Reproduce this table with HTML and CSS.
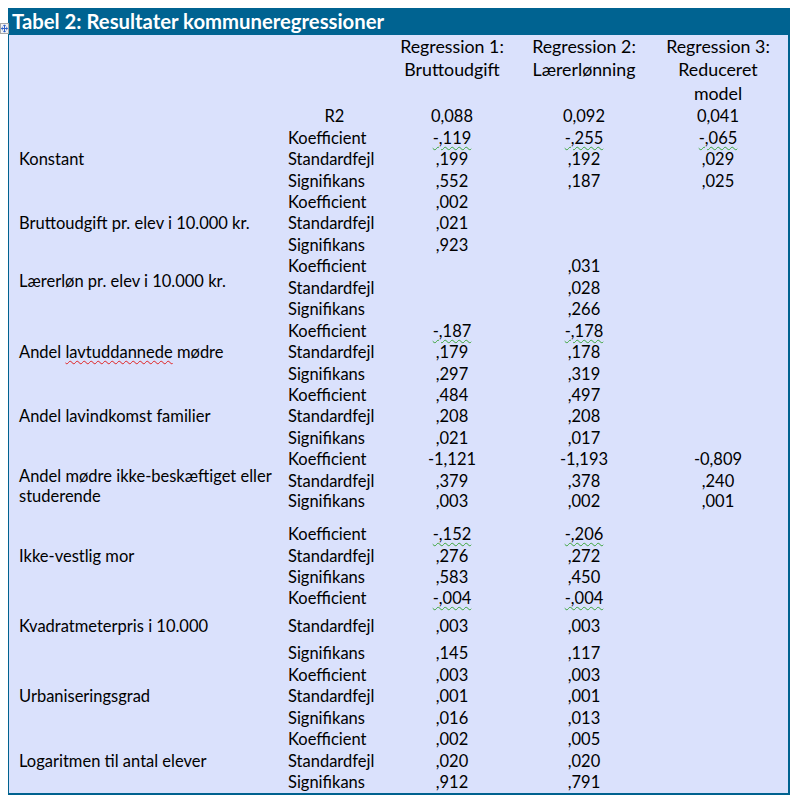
FILE: index.html
```html
<!DOCTYPE html>
<html lang="da">
<head>
<meta charset="utf-8">
<title>Tabel 2: Resultater kommuneregressioner</title>
<link rel="stylesheet" href="styles.css">
</head>
<body>
<div class="sheet">
  <div class="move-handle">
    <svg width="9" height="11" viewBox="0 0 9 11">
      <rect x="0.5" y="0.5" width="8" height="10" fill="#f4f4f4" stroke="#a8a8a8"/>
      <path d="M4.5 2 V9 M1.5 5.5 H7.5" stroke="#3060c8" stroke-width="1" fill="none"/>
      <path d="M3.2 3.2 L4.5 1.8 L5.8 3.2 M3.2 7.8 L4.5 9.2 L5.8 7.8 M2.7 4.2 L1.3 5.5 L2.7 6.8 M6.3 4.2 L7.7 5.5 L6.3 6.8" stroke="#3060c8" stroke-width="1" fill="none"/>
    </svg>
  </div>
  <div class="title">Tabel 2: Resultater kommuneregressioner</div>
  <div class="panel">
    <table class="res">
      <colgroup>
        <col class="col-label">
        <col class="col-sub">
        <col class="col-n1">
        <col class="col-n2">
        <col class="col-n3">
      </colgroup>
      <thead>
        <tr class="head">
          <th></th><th></th>
          <th>Regression 1:<br>Bruttoudgift</th>
          <th>Regression 2:<br>Lærerlønning</th>
          <th>Regression 3:<br>Reduceret<br>model</th>
        </tr>
        <tr class="r2">
          <td></td><td class="sub center">R2</td>
          <td class="num">0,088</td><td class="num">0,092</td><td class="num">0,041</td>
        </tr>
      </thead>
      <tbody>
        <tr><td class="label" rowspan="3">Konstant</td><td class="sub">Koefficient</td><td class="num"><span class="sq">-,119</span></td><td class="num"><span class="sq">-,255</span></td><td class="num"><span class="sq">-,065</span></td></tr>
        <tr><td class="sub">Standardfejl</td><td class="num">,199</td><td class="num">,192</td><td class="num">,029</td></tr>
        <tr><td class="sub">Signifikans</td><td class="num">,552</td><td class="num">,187</td><td class="num">,025</td></tr>

        <tr><td class="label" rowspan="3">Bruttoudgift pr. elev i 10.000 kr.</td><td class="sub">Koefficient</td><td class="num">,002</td><td class="num"></td><td class="num"></td></tr>
        <tr><td class="sub">Standardfejl</td><td class="num">,021</td><td class="num"></td><td class="num"></td></tr>
        <tr><td class="sub">Signifikans</td><td class="num">,923</td><td class="num"></td><td class="num"></td></tr>

        <tr><td class="label raised" rowspan="3">Lærerløn pr. elev i 10.000 kr.</td><td class="sub">Koefficient</td><td class="num"></td><td class="num">,031</td><td class="num"></td></tr>
        <tr><td class="sub">Standardfejl</td><td class="num"></td><td class="num">,028</td><td class="num"></td></tr>
        <tr><td class="sub">Signifikans</td><td class="num"></td><td class="num">,266</td><td class="num"></td></tr>

        <tr><td class="label" rowspan="3">Andel <span class="sp">lavtuddannede</span> mødre</td><td class="sub">Koefficient</td><td class="num"><span class="sq">-,187</span></td><td class="num"><span class="sq">-,178</span></td><td class="num"></td></tr>
        <tr><td class="sub">Standardfejl</td><td class="num">,179</td><td class="num">,178</td><td class="num"></td></tr>
        <tr><td class="sub">Signifikans</td><td class="num">,297</td><td class="num">,319</td><td class="num"></td></tr>

        <tr><td class="label" rowspan="3">Andel lavindkomst familier</td><td class="sub">Koefficient</td><td class="num">,484</td><td class="num">,497</td><td class="num"></td></tr>
        <tr><td class="sub">Standardfejl</td><td class="num">,208</td><td class="num">,208</td><td class="num"></td></tr>
        <tr><td class="sub">Signifikans</td><td class="num">,021</td><td class="num">,017</td><td class="num"></td></tr>

        <tr><td class="label two" rowspan="3">Andel mødre ikke-beskæftiget eller<br>studerende</td><td class="sub">Koefficient</td><td class="num">-1,121</td><td class="num">-1,193</td><td class="num">-0,809</td></tr>
        <tr><td class="sub">Standardfejl</td><td class="num">,379</td><td class="num">,378</td><td class="num">,240</td></tr>
        <tr class="tall-top"><td class="sub">Signifikans</td><td class="num">,003</td><td class="num">,002</td><td class="num">,001</td></tr>

        <tr><td class="label" rowspan="3">Ikke-vestlig mor</td><td class="sub">Koefficient</td><td class="num"><span class="sq">-,152</span></td><td class="num"><span class="sq">-,206</span></td><td class="num"></td></tr>
        <tr><td class="sub">Standardfejl</td><td class="num">,276</td><td class="num">,272</td><td class="num"></td></tr>
        <tr><td class="sub">Signifikans</td><td class="num">,583</td><td class="num">,450</td><td class="num"></td></tr>

        <tr><td class="label" rowspan="3">Kvadratmeterpris i 10.000</td><td class="sub">Koefficient</td><td class="num"><span class="sq">-,004</span></td><td class="num"><span class="sq">-,004</span></td><td class="num"></td></tr>
        <tr class="tall-mid"><td class="sub">Standardfejl</td><td class="num">,003</td><td class="num">,003</td><td class="num"></td></tr>
        <tr><td class="sub">Signifikans</td><td class="num">,145</td><td class="num">,117</td><td class="num"></td></tr>

        <tr><td class="label" rowspan="3">Urbaniseringsgrad</td><td class="sub">Koefficient</td><td class="num">,003</td><td class="num">,003</td><td class="num"></td></tr>
        <tr><td class="sub">Standardfejl</td><td class="num">,001</td><td class="num">,001</td><td class="num"></td></tr>
        <tr><td class="sub">Signifikans</td><td class="num">,016</td><td class="num">,013</td><td class="num"></td></tr>

        <tr><td class="label" rowspan="3">Logaritmen til antal elever</td><td class="sub">Koefficient</td><td class="num">,002</td><td class="num">,005</td><td class="num"></td></tr>
        <tr><td class="sub">Standardfejl</td><td class="num">,020</td><td class="num">,020</td><td class="num"></td></tr>
        <tr><td class="sub">Signifikans</td><td class="num">,912</td><td class="num">,791</td><td class="num"></td></tr>
      </tbody>
    </table>
  </div>
  <div class="resize-handle"></div>
</div>
</body>
</html>
```

FILE: styles.css
```css
html, body {
  margin: 0;
  padding: 0;
  background: #ffffff;
}

body {
  font-family: Lato, "Open Sans", "Liberation Sans", sans-serif;
  color: #000000;
}

.sheet {
  position: relative;
  margin: 8px 0 0 8px;
  width: 782px;
}

.move-handle {
  position: absolute;
  left: -8px;
  top: 15px;
  width: 9px;
  height: 11px;
  line-height: 0;
}

.title {
  height: 27px;
  background: #006391;
  color: #ffffff;
  font-weight: 700;
  font-size: 20.3px;
  line-height: 27px;
  padding-left: 4px;
  white-space: nowrap;
}

.panel {
  background: #dae1fc;
  border-left: 1px solid #00628f;
  border-right: 2px solid #00628f;
  border-bottom: 2px solid #00628f;
}

.res {
  width: 779px;
  table-layout: fixed;
  border-collapse: collapse;
  border-spacing: 0;
  font-size: 16.5px;
}

.col-label { width: 276px; }
.col-sub { width: 99px; }
.col-n1 { width: 136px; }
.col-n2 { width: 128px; }
.col-n3 { width: 140px; }

.res th,
.res td {
  padding: 0;
  height: 21.45px;
  line-height: 18px;
  vertical-align: middle;
  white-space: nowrap;
}

.res .head th {
  height: 70px;
  font-weight: 400;
  font-size: 17.8px;
  line-height: 23.3px;
  text-align: center;
  vertical-align: top;
}

.res .r2 td {
  height: 22px;
}

.res td.label {
  padding-left: 10px;
  white-space: normal;
}

.res td.label.raised {
  padding-bottom: 14px;
}

.res td.label.two {
  line-height: 20.5px;
  white-space: nowrap;
}

.res td.sub {
  padding-left: 3px;
}

.res td.sub.center {
  padding-left: 0;
  text-align: center;
}

.res td.num {
  text-align: center;
}

.res .tall-top td {
  height: 32px;
  vertical-align: top;
  line-height: 21.45px;
}

.res .tall-mid td {
  height: 33.5px;
}

.sq {
  text-decoration: underline wavy #3aa43a;
  text-decoration-thickness: 1px;
  text-underline-offset: 2px;
}

.sp {
  text-decoration: underline wavy #e02020;
  text-decoration-thickness: 1px;
  text-underline-offset: 2px;
}

.resize-handle {
  position: absolute;
  right: -3px;
  bottom: -7px;
  width: 4px;
  height: 6px;
  border-top: 1px solid #a0a0a0;
  border-left: 1px solid #a0a0a0;
}
```
